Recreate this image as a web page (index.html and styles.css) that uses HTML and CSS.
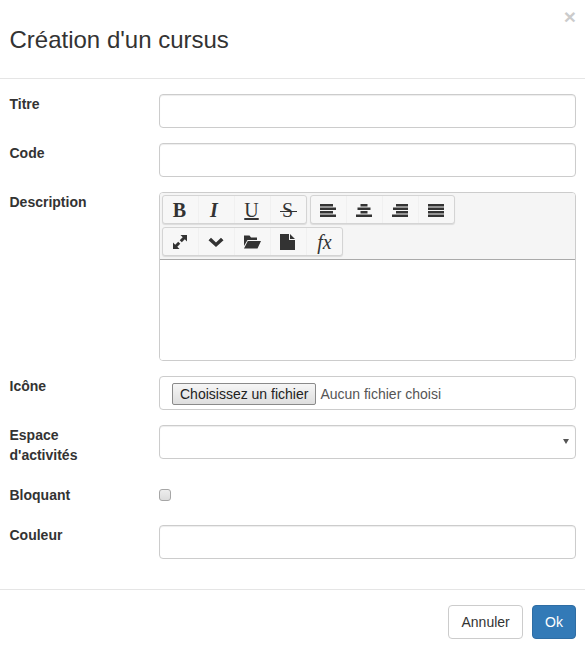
FILE: index.html
```html
<!DOCTYPE html>
<html lang="fr">
<head>
    <meta charset="UTF-8">
    <title>Création d'un cursus</title>
    <link rel="stylesheet" href="styles.css">
</head>
<body>
    <div class="modal">
        <div class="modal-header">
            <button class="close" type="button">×</button>
            <h4 class="modal-title">Création d'un cursus</h4>
        </div>

        <form class="modal-body">
            <div class="form-row">
                <label class="form-label">Titre</label>
                <input class="form-control" type="text">
            </div>
            <div class="form-row">
                <label class="form-label">Code</label>
                <input class="form-control" type="text">
            </div>

            <!-- Editor -->
            <div class="form-row">
                <label class="form-label">Description</label>
                <div class="editor">
                    <div class="editor-toolbar">
                        <div class="btn-group">
                            <span class="tool tool-text tool-b">B</span>
                            <span class="tool tool-text tool-i">I</span>
                            <span class="tool tool-text tool-u">U</span>
                            <span class="tool tool-text tool-s">S</span>
                        </div>
                        <div class="btn-group">
                            <span class="tool"><svg width="16" height="14" viewBox="0 0 16 14"><path d="M0 1h13v2.500H0zM0 4.500h16V7H0zM0 8h13v2.500H0zM0 11.500h16V14H0z"/></svg></span>
                            <span class="tool"><svg width="16" height="14" viewBox="0 0 16 14"><path d="M4.500 1h7v2.500h-7zM1.500 4.500h13V7h-13zM4.500 8h7v2.500h-7zM0 11.500h16V14H0z"/></svg></span>
                            <span class="tool"><svg width="16" height="14" viewBox="0 0 16 14"><path d="M4 1h12v2.500H4zM1 4.500h15V7H1zM4 8h12v2.500H4zM0 11.500h16V14H0z"/></svg></span>
                            <span class="tool"><svg width="16" height="14" viewBox="0 0 16 14"><path d="M0 1h16v2.500H0zM0 4.500h16V7H0zM0 8h16v2.500H0zM0 11.500h16V14H0z"/></svg></span>
                        </div>
                        <div class="btn-group">
                            <span class="tool"><svg width="16" height="16" viewBox="0 0 16 16"><path d="M8.500 1H15V7.500L12.800 5.300 9.800 8.300 7.700 6.200 10.700 3.200zM7.500 15H1V8.500L3.200 10.700 6.200 7.700 8.300 9.800 5.300 12.800z"/></svg></span>
                            <span class="tool"><svg width="16" height="10" viewBox="0 0 16 10"><path d="M0.500 3.200L3 0.700 8 5.500 13 0.700 15.500 3.200 8 10z"/></svg></span>
                            <span class="tool"><svg width="18" height="14" viewBox="0 0 18 14"><path d="M1 0.500h5.500L8 2.500h6v2.500H4.500L1 11zM4.800 6H18l-3.500 7.500H1z"/></svg></span>
                            <span class="tool"><svg width="15" height="16" viewBox="0 0 15 16"><path d="M0 0h9v6h6v10H0zM10 0l5 5h-5z"/></svg></span>
                            <span class="tool tool-text tool-fx">fx</span>
                        </div>
                    </div>
                    <div class="editor-area" contenteditable="true"></div>
                </div>
            </div>

            <div class="form-row">
                <label class="form-label">Icône</label>
                <div class="form-control file-input">
                    <button class="file-btn" type="button">Choisissez un fichier</button>
                    <span class="file-name">Aucun fichier choisi</span>
                </div>
            </div>
            <div class="form-row">
                <label class="form-label form-label-wrap">Espace d'activités</label>
                <div class="select-wrap">
                    <select class="form-control"><option></option></select>
                </div>
            </div>
            <div class="form-row">
                <label class="form-label">Bloquant</label>
                <div><input class="checkbox" type="checkbox"></div>
            </div>
            <div class="form-row">
                <label class="form-label">Couleur</label>
                <input class="form-control" type="text">
            </div>
        </form>

        <div class="modal-footer">
            <button class="btn btn-default" type="button">Annuler</button>
            <button class="btn btn-primary" type="button">Ok</button>
        </div>
    </div>
</body>
</html>
```

FILE: styles.css
```css
* {
    box-sizing: border-box;
}

body {
    margin: 0;
    font-family: "Liberation Sans", Arial, sans-serif;
    font-size: 14px;
    line-height: 20px;
    color: #333;
    background-color: #fff;
}

.modal {
    position: relative;
}

/* Header */
.modal-header {
    padding: 23px 9px 21px 9.5px;
    border-bottom: 1px solid #e5e5e5;
}

.modal-title {
    margin: 0;
    font-size: 24px;
    font-weight: 400;
    line-height: 34px;
}

.close {
    position: absolute;
    top: 6px;
    right: 9px;
    padding: 0;
    border: 0;
    background: transparent;
    font-family: inherit;
    font-size: 21px;
    font-weight: 700;
    line-height: 21px;
    color: #000;
    opacity: 0.2;
    cursor: pointer;
}

/* Form rows */
.modal-body {
    padding: 15px 9px 15px 9.5px;
}

.form-row {
    display: grid;
    grid-template-columns: 149.5px 1fr;
    margin-bottom: 15px;
}

.form-label {
    display: block;
    margin-bottom: 5px;
    font-weight: 700;
}

.form-label-wrap {
    padding-right: 40px;
}

.form-control {
    display: block;
    width: 100%;
    height: 34px;
    padding: 6px 12px;
    border: 1px solid #ccc;
    border-radius: 4px;
    background-color: #fff;
    box-shadow: inset 0 1px 1px rgba(0, 0, 0, 0.075);
    font-family: inherit;
    font-size: 14px;
    line-height: 20px;
    color: #555;
}

select.form-control {
    appearance: none;
}

.select-wrap {
    position: relative;
}

/* small arrow of the select */
.select-wrap::after {
    content: "";
    position: absolute;
    top: 14px;
    right: 7px;
    border-top: 5px solid #555;
    border-left: 3.5px solid transparent;
    border-right: 3.5px solid transparent;
}

.file-input {
    display: flex;
    align-items: center;
    gap: 4px;
    padding-top: 2px;
    padding-bottom: 0;
    box-shadow: none;
}

.file-btn {
    height: 22px;
    padding: 0 7px;
    border: 1px solid #8a8a8a;
    border-radius: 2px;
    background: linear-gradient(#f6f6f6, #dedede);
    font-family: inherit;
    font-size: 14px;
    color: #222;
}

.checkbox {
    appearance: none;
    display: block;
    width: 12px;
    height: 12px;
    margin: 4px 0 0;
    border: 1px solid #a6a6a6;
    border-radius: 3px;
    background: linear-gradient(#ededed, #dcdcdc);
}

/* Editor */
.editor {
    border: 1px solid #ccc;
    border-radius: 4px;
    overflow: hidden;
}

.editor-toolbar {
    display: flex;
    flex-wrap: wrap;
    gap: 3px;
    padding: 2px 2px 3px;
    background-color: #f5f5f5;
    border-bottom: 1px solid #aaa;
}

.btn-group {
    display: flex;
    height: 29px;
    border: 1px solid #d4d4d4;
    border-radius: 3px;
    background-color: #f7f7f7;
    box-shadow: 0 1px 1px rgba(0, 0, 0, 0.1);
}

.btn-group:last-child {
    margin-right: 100px;
}

.tool {
    display: flex;
    align-items: center;
    justify-content: center;
    width: 36px;
    padding-right: 2px;
    border-right: 1px solid #f0f0f0;
    color: #333;
}

.tool:last-child {
    width: 35px;
    border-right: 0;
}

.tool svg {
    fill: #333;
}

.tool-text {
    font-family: "Liberation Serif", "Times New Roman", serif;
    font-size: 20px;
}

.tool-b {
    font-weight: 700;
}

.tool-i {
    padding-right: 5px;
    font-style: italic;
    font-weight: 700;
}

.tool-u {
    text-decoration: underline;
}

.tool-s {
    position: relative;
}

/* the strike runs wider than the letter */
.tool-s::after {
    content: "";
    position: absolute;
    top: 15px;
    left: 9px;
    width: 17px;
    height: 1px;
    background-color: #333;
}

.tool-fx {
    padding-right: 0;
    font-style: italic;
}

.editor-area {
    height: 100px;
    background-color: #fff;
}

/* Footer */
.modal-footer {
    display: flex;
    justify-content: flex-end;
    gap: 9px;
    padding: 15px 9px 15px 15px;
    border-top: 1px solid #e5e5e5;
}

.btn {
    height: 34px;
    padding: 6px 12px;
    border: 1px solid transparent;
    border-radius: 4px;
    font-family: inherit;
    font-size: 14px;
    line-height: 20px;
    cursor: pointer;
}

.btn-default {
    width: 75px;
    color: #333;
    background-color: #fff;
    border-color: #ccc;
}

.btn-primary {
    color: #fff;
    background-color: #337ab7;
    border-color: #2e6da4;
}
```
